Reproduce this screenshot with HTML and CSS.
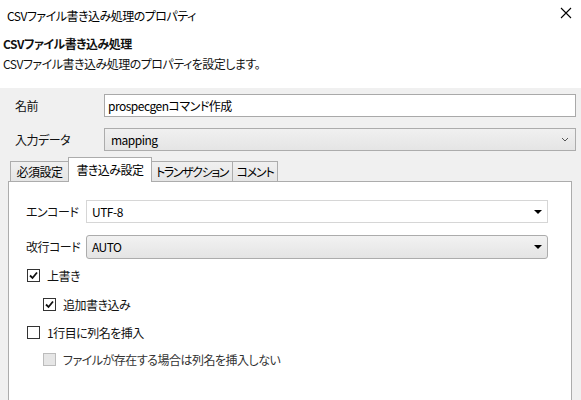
FILE: index.html
```html
<!DOCTYPE html>
<html lang="ja">
<head>
<meta charset="utf-8">
<link rel="stylesheet" href="styles.css">
</head>
<body>
<div class="window">
  <div class="titlebar">
    <span class="title">CSVファイル書き込み処理のプロパティ</span>
    <svg class="close" width="12" height="12" viewBox="0 0 12 12"><path d="M1 1L11 11M11 1L1 11" stroke="#000" stroke-width="1.1" fill="none"/></svg>
  </div>
  <div class="header">
    <div class="h-title">CSVファイル書き込み処理</div>
    <div class="h-desc">CSVファイル書き込み処理のプロパティを設定します。</div>
  </div>
  <div class="main">
    <div class="row">
      <span class="label">名前</span>
      <div class="input">prospecgenコマンド作成</div>
    </div>
    <div class="row row-gap">
      <span class="label">入力データ</span>
      <div class="dropdown">
        <span>mapping</span>
        <svg width="8" height="5" viewBox="0 0 8 5"><path d="M1 1L4 4L7 1" stroke="#555" stroke-width="1" fill="none"/></svg>
      </div>
    </div>
    <div class="tabs">
      <div class="tab t1">必須設定</div>
      <div class="tab t2 active">書き込み設定</div>
      <div class="tab t3">トランザクション</div>
      <div class="tab t4">コメント</div>
    </div>
    <div class="panel">
      <div class="prow">
        <span class="plabel">エンコード</span>
        <div class="combo flat"><span>UTF-8</span><span class="tri"></span></div>
      </div>
      <div class="prow prow-gap">
        <span class="plabel">改行コード</span>
        <div class="combo raised"><span>AUTO</span><span class="tri"></span></div>
      </div>
      <div class="check c1">
        <span class="box"><svg width="11" height="11" viewBox="0 0 11 11"><path d="M2 5.5L4.5 8L9 2.5" stroke="#111" stroke-width="1.8" fill="none"/></svg></span>
        <span>上書き</span>
      </div>
      <div class="check c2 indent">
        <span class="box"><svg width="11" height="11" viewBox="0 0 11 11"><path d="M2 5.5L4.5 8L9 2.5" stroke="#111" stroke-width="1.8" fill="none"/></svg></span>
        <span>追加書き込み</span>
      </div>
      <div class="check c3">
        <span class="box"></span>
        <span>1行目に列名を挿入</span>
      </div>
      <div class="check c4 indent disabled">
        <span class="box"></span>
        <span>ファイルが存在する場合は列名を挿入しない</span>
      </div>
    </div>
  </div>
</div>
</body>
</html>
```
FILE: styles.css
```css
html, body {
  margin: 0;
  padding: 0;
}
body {
  width: 581px;
  height: 400px;
  overflow: hidden;
  font-family: "Noto Sans CJK JP", "Noto Sans", sans-serif;
  font-feature-settings: "palt";
  font-size: 12px;
  letter-spacing: -0.5px;
  color: #111;
  background: #fff;
}
.window {
  display: flex;
  flex-direction: column;
  height: 400px;
}
.titlebar {
  height: 30px;
  display: flex;
  align-items: center;
  justify-content: space-between;
  padding: 0 9px 0 7px;
  background: #fff;
}
.title {
  font-size: 12px;
  color: #000;
}
.close {
  margin-top: -4px;
}
.header {
  height: 58px;
  box-sizing: border-box;
  padding: 4px 0 0 3px;
  background: #fff;
}
.h-title {
  font-weight: bold;
  line-height: 19px;
}
.h-desc {
  line-height: 19px;
  margin-top: 1px;
}
.main {
  flex: 1;
  background: #f0f0f0;
  padding: 6px 5px 0 8px;
  display: flex;
  flex-direction: column;
}
.row {
  display: flex;
  align-items: center;
  height: 23px;
}
.row-gap {
  margin-top: 11px;
}
.label {
  width: 96px;
  padding-left: 7px;
  box-sizing: border-box;
  color: #111;
}
.input {
  flex: 1;
  height: 23px;
  box-sizing: border-box;
  border: 1px solid #a9a9a9;
  background: #fff;
  padding-left: 3px;
  display: flex;
  align-items: center;
  color: #000;
}
.dropdown {
  flex: 1;
  height: 23px;
  box-sizing: border-box;
  border: 1px solid #acacac;
  background: linear-gradient(#f0f0f0, #e5e5e5);
  padding: 0 6px 0 6px;
  display: flex;
  align-items: center;
  justify-content: space-between;
  color: #000;
}
.tabs {
  display: flex;
  align-items: flex-end;
  margin-top: 6px;
  padding-left: 2px;
  height: 24px;
  position: relative;
  z-index: 1;
}
.tab {
  height: 20px;
  box-sizing: border-box;
  border: 1px solid #acacac;
  border-bottom: none;
  background: linear-gradient(#f0f0f0, #e5e5e5);
  display: flex;
  align-items: center;
  justify-content: center;
  margin-right: -1px;
  color: #000;
  white-space: nowrap;
}
.t1 { width: 59px; }
.t2 { width: 84px; }
.t3 { width: 82px; letter-spacing: -1.4px; }
.t4 { width: 46px; letter-spacing: -1.2px; }
.tab.active {
  height: 25px;
  background: #fff;
  margin-bottom: -1px;
  padding-bottom: 2px;
  position: relative;
  z-index: 2;
}
.panel {
  flex: 1;
  width: 564px;
  box-sizing: border-box;
  background: #fff;
  border: 1px solid #acacac;
  border-bottom: none;
  padding: 18px 0 0 17px;
  display: flex;
  flex-direction: column;
}
.prow {
  display: flex;
  align-items: center;
  height: 23px;
}
.prow-gap {
  margin-top: 12px;
}
.plabel {
  width: 60px;
}
.combo {
  width: 462px;
  height: 23px;
  box-sizing: border-box;
  display: flex;
  align-items: center;
  justify-content: space-between;
  padding: 0 5px 0 5px;
  color: #000;
}
.combo.flat {
  border: 1px solid #d6d6d6;
  background: #fff;
}
.combo.raised {
  border: 1px solid #acacac;
  border-radius: 3px;
  background: linear-gradient(#f2f2f2, #e4e4e4);
  height: 24px;
}
.tri {
  width: 0;
  height: 0;
  border-left: 4px solid transparent;
  border-right: 4px solid transparent;
  border-top: 4px solid #000;
}
.check {
  display: flex;
  align-items: center;
  height: 16px;
  color: #111;
}
.c1 { margin-top: 9px; }
.c2 { margin-top: 13px; }
.c3 { margin-top: 12px; }
.c4 { margin-top: 11px; }
.indent {
  padding-left: 16px;
}
.box {
  width: 13px;
  height: 13px;
  box-sizing: border-box;
  border: 1px solid #333;
  background: #fff;
  margin: 0 7px 0 1px;
  display: flex;
  align-items: center;
  justify-content: center;
}
.disabled .box {
  border-color: #bcbcbc;
  background: #e6e6e6;
}
.disabled {
  color: #333;
}
```
